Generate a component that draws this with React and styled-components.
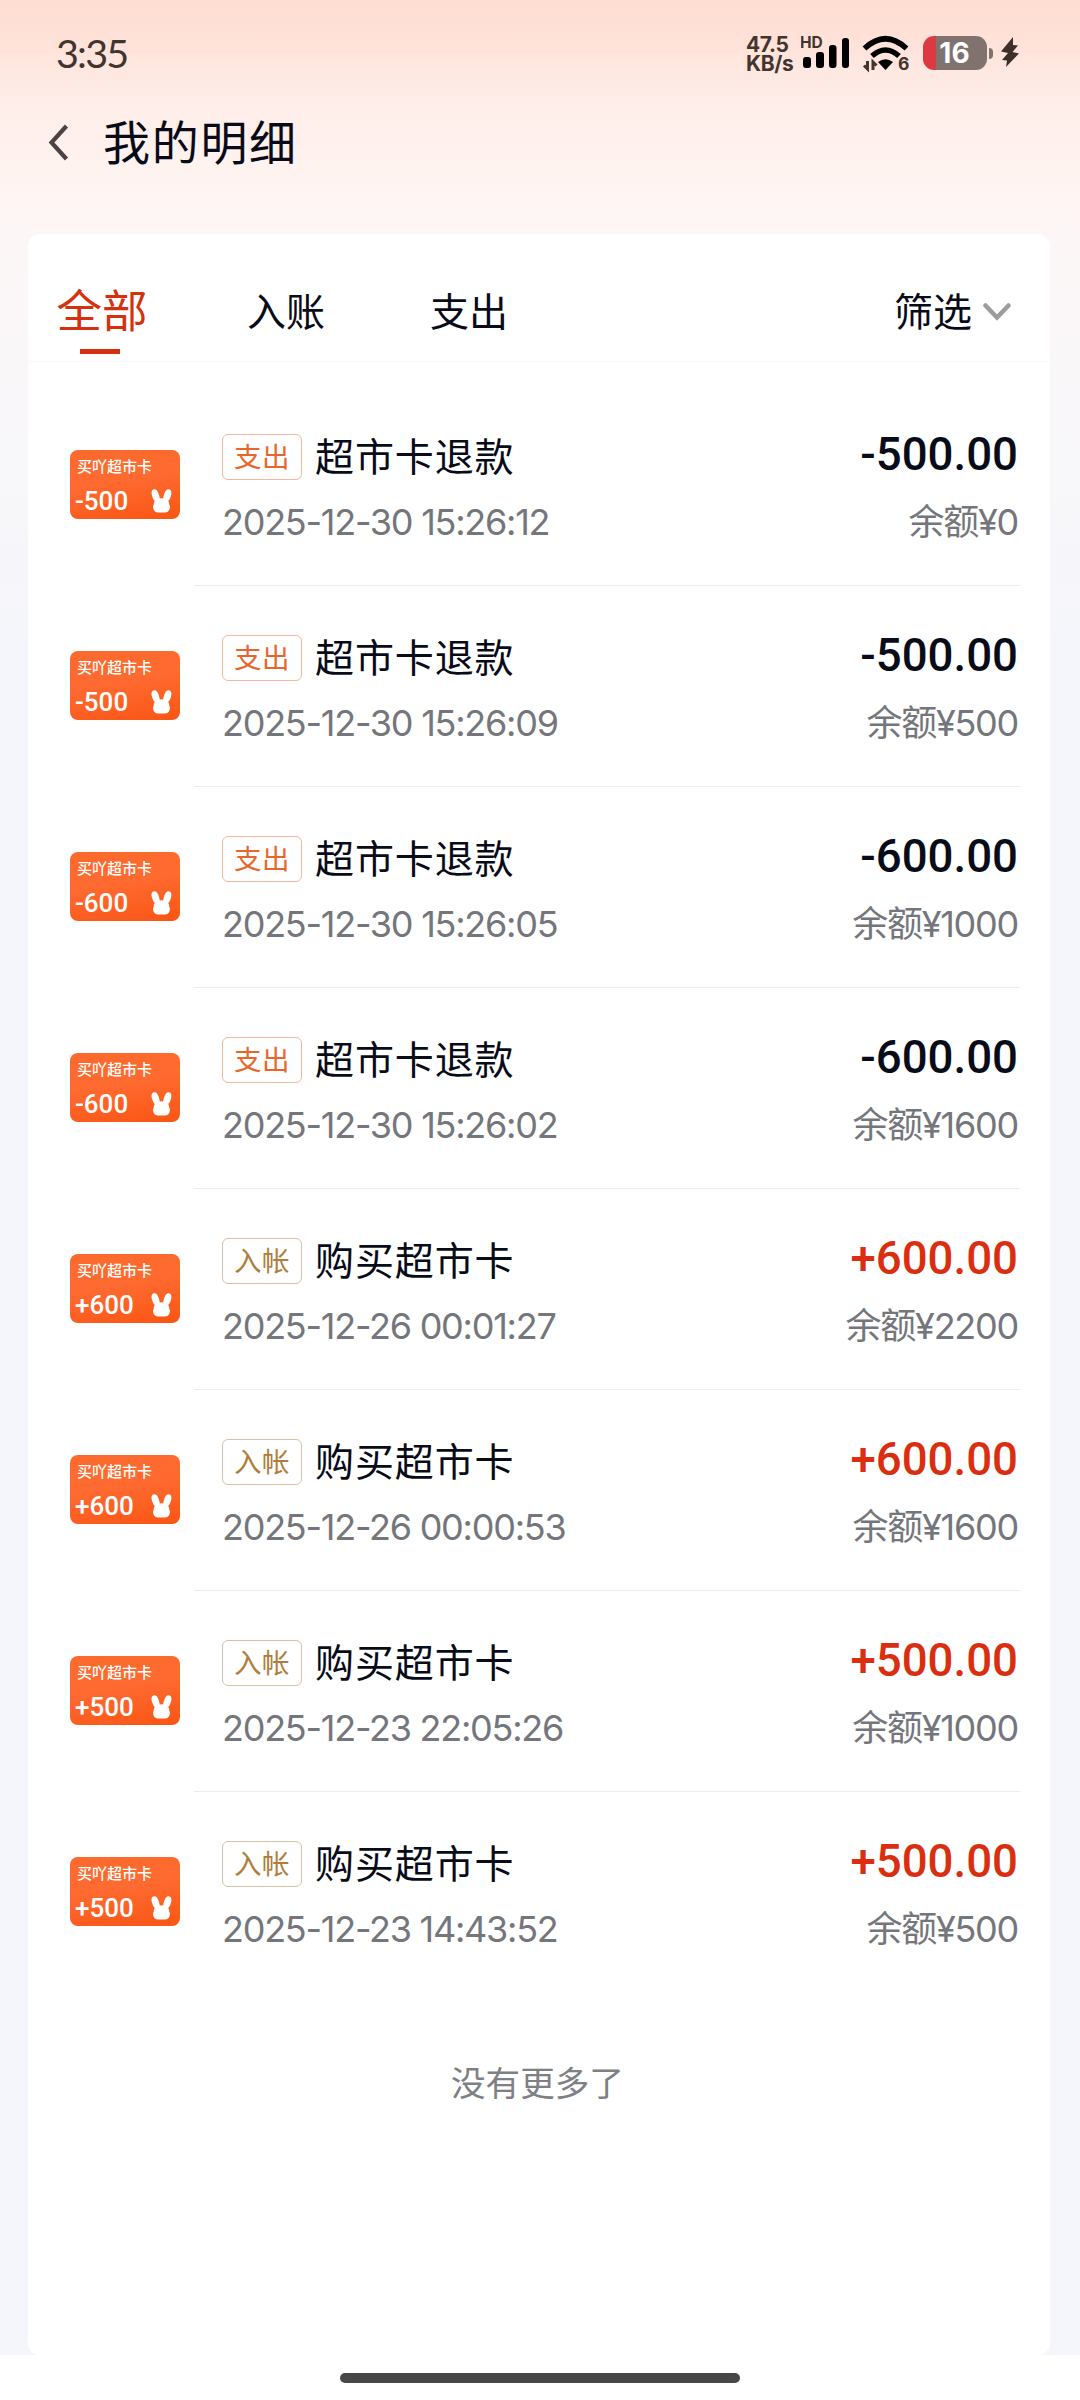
import React from 'react';
import styled, { createGlobalStyle } from 'styled-components';

const GlobalStyle = createGlobalStyle`
  * {
    box-sizing: border-box;
  }

  body {
    margin: 0;
    font-family: Inter, 'Noto Sans CJK SC', sans-serif;
    color: #080b18;
  }
`;

const Page = styled.div`
  display: flex;
  flex-direction: column;
  width: 1080px;
  height: 2400px;
  overflow: hidden;
  background: linear-gradient(
    180deg,
    #ffddd2 0,
    #ffe2d9 45px,
    #fee9e2 75px,
    #ffeeea 110px,
    #fff5f3 200px,
    #fcf6f6 240px,
    #f9f7f9 400px,
    #f5f6fb 640px
  );
`;

const StatusBar = styled.div`
  display: flex;
  justify-content: space-between;
  height: 100px;
  padding: 32px 61px 0 56px;
  color: #43342e;
`;

const Clock = styled.div`
  height: 42px;
  font-family: Lato, sans-serif;
  font-size: 39.5px;
  line-height: 41px;
  letter-spacing: -1.8px;
`;

const StatusIcons = styled.div`
  display: flex;
  height: 42px;
`;

const Speed = styled.div`
  width: 55px;
  padding-top: 3px;
  font-size: 21px;
  font-weight: 700;
  line-height: 19px;
  letter-spacing: -0.4px;
`;

const Battery = styled.div`
  display: flex;
  align-items: center;
  width: 72px;
  height: 42px;
  margin-left: 13px;
`;

const BatteryBody = styled.div`
  width: 64px;
  height: 34px;
  padding-right: 1px;
  border-radius: 11px;
  background: linear-gradient(90deg, #dc3a40 13px, #80736f 13px);
  color: #fff;
  font-size: 28px;
  font-weight: 700;
  line-height: 34px;
  text-align: center;
`;

const BatteryTip = styled.div`
  width: 4px;
  height: 11px;
  margin-left: 2px;
  border-radius: 0 5px 5px 0;
  background: #80736f;
`;

const Header = styled.header`
  display: flex;
  align-items: center;
  height: 84px;
  padding-left: 48px;
  margin-bottom: 50px;
`;

const Title = styled.h1`
  margin: -4px 0 0 34px;
  font-family: 'Noto Sans CJK SC', sans-serif;
  font-size: 47px;
  font-weight: 400;
  line-height: 60px;
  letter-spacing: 1.7px;
`;

const Card = styled.main`
  width: 1022px;
  height: 2121px;
  margin-left: 28px;
  border-radius: 12px;
  background: #fff;
`;

const Tabs = styled.nav`
  display: flex;
  height: 128px;
  padding: 48px 39px 0 29px;
  border-bottom: 1px solid #f8f8f8;
`;

const Tab = styled.div`
  display: flex;
  flex-direction: column;
  align-items: center;
  width: ${({ $width }) => $width}px;
  color: ${({ $active }) => ($active ? '#d5310e' : 'inherit')};
  font-size: ${({ $active }) => ($active ? 45.5 : 39)}px;
  line-height: 60px;
  white-space: nowrap;

  &::after {
    content: '';
    display: ${({ $active }) => ($active ? 'block' : 'none')};
    width: 40px;
    height: 5px;
    margin: 7px 4px 0 0;
    background: #d5310e;
  }
`;

const Filter = styled.div`
  display: flex;
  align-items: center;
  gap: 11px;
  height: 60px;
  margin-left: auto;
  font-size: 39px;
`;

const FilterLabel = styled.span`
  height: 60px;
  line-height: 59px;
`;

const List = styled.div`
  padding: 23px 30px 0 42px;
`;

const Row = styled.div`
  display: flex;
  height: 201px;
`;

const Thumb = styled.div`
  display: flex;
  flex-direction: column;
  justify-content: space-between;
  width: 110px;
  height: 69px;
  margin: 65px 14px 0 0;
  padding: 6px 8px 5px 5px;
  border-radius: 8px;
  background: linear-gradient(170deg, #fb6a2c 0%, #ff6a30 45%, #fa5514 100%);
  color: #fff;
`;

const ThumbName = styled.div`
  padding-left: 2px;
  font-size: 15px;
  font-weight: 500;
  line-height: 21px;
  white-space: nowrap;
`;

const ThumbBottom = styled.div`
  display: flex;
  align-items: center;
  justify-content: space-between;
  height: 28px;
  padding-top: 1px;
  font-family: Roboto, sans-serif;
  font-size: 26px;
  font-weight: 500;
`;

const Content = styled.div`
  display: flex;
  flex: 1;
  justify-content: space-between;
  padding: 49px 2px 0 28px;
  border-bottom: 1px solid ${({ $last }) => ($last ? 'transparent' : '#ececee')};
`;

const NameLine = styled.div`
  display: flex;
  height: 46px;
  font-size: 39px;
  line-height: 46px;
  letter-spacing: 0.9px;
`;

const Tag = styled.span`
  width: 80px;
  height: 46px;
  margin-right: 13px;
  border: 1.5px solid ${({ $income }) => ($income ? '#d9bfa6' : '#f6b59d')};
  border-radius: 6px;
  color: ${({ $income }) => ($income ? '#b07d3c' : '#e8662a')};
  font-size: 27.5px;
  line-height: 44px;
  letter-spacing: 0.5px;
  text-align: center;
`;

const Time = styled.div`
  margin-top: 21px;
  color: #74767c;
  font-size: 36px;
  line-height: 42px;
  letter-spacing: -1.25px;
`;

const Amounts = styled.div`
  text-align: right;
`;

const Amount = styled.div`
  height: 46px;
  color: ${({ $income }) => ($income ? '#d92f10' : '#080b18')};
  font-family: Roboto, sans-serif;
  font-size: 45.6px;
  font-weight: 500;
  line-height: 41px;
`;

const Balance = styled(Time)`
  margin-right: 0;
`;

const End = styled.div`
  margin-top: 65px;
  padding-right: 3px;
  color: #7e8085;
  font-size: 34.6px;
  line-height: 50px;
  text-align: center;
`;

const HomeBar = styled.footer`
  display: flex;
  justify-content: center;
  height: 45px;
  padding-top: 18px;
  background: #fff;

  &::after {
    content: '';
    width: 400px;
    height: 10px;
    border-radius: 5px;
    background: #474747;
  }
`;

const records = [
  { name: '超市卡退款', time: '2025-12-30 15:26:12', amount: -500, balance: 0 },
  { name: '超市卡退款', time: '2025-12-30 15:26:09', amount: -500, balance: 500 },
  { name: '超市卡退款', time: '2025-12-30 15:26:05', amount: -600, balance: 1000 },
  { name: '超市卡退款', time: '2025-12-30 15:26:02', amount: -600, balance: 1600 },
  { name: '购买超市卡', time: '2025-12-26 00:01:27', amount: 600, balance: 2200 },
  { name: '购买超市卡', time: '2025-12-26 00:00:53', amount: 600, balance: 1600 },
  { name: '购买超市卡', time: '2025-12-23 22:05:26', amount: 500, balance: 1000 },
  { name: '购买超市卡', time: '2025-12-23 14:43:52', amount: 500, balance: 500 },
];

const Signal = () => (
  <svg width="48" height="42" viewBox="0 0 48 42">
    <text x="-1" y="16" fontSize="15.500" fontWeight="700" fill="#43342e">
      HD
    </text>
    <g fill="#000">
      <rect x="2" y="25" width="8" height="11" rx="3" />
      <rect x="15" y="20" width="8" height="16" rx="3" />
      <rect x="28" y="13" width="7.5" height="23" rx="3" />
      <rect x="41" y="6" width="7" height="30" rx="3" />
    </g>
  </svg>
);

const WifiIcon = styled.svg`
  margin-left: 13px;
`;

const Wifi = () => (
  <WifiIcon width="48" height="42" viewBox="0 0 48 42">
    <g fill="none" stroke="#000" strokeWidth="5.500">
      <path d="M2.500 16.500q21-19.500 42 0" />
      <path d="M10 24q13.500-12 27 0" />
    </g>
    <path d="M16 30q7.500-5.500 15 0l-7.500 8z" fill="#000" />
    <path d="M5.500 29v8l-3.500-3.500M11 38v-8l3.500 3.500" fill="none" stroke="#43342e" strokeWidth="3" />
    <text x="36" y="38" fontSize="17.500" fontWeight="700" fill="#43342e">
      6
    </text>
  </WifiIcon>
);

const BoltIcon = styled.svg`
  margin-left: 5px;
`;

const Bolt = () => (
  <BoltIcon width="19" height="42" viewBox="0 0 19 42">
    <path d="M13 5L1 19.500l7 1.500-6 7 5 .5L6 35l13-13.500-6.500-1.500L18 13.500l-5-.5z" fill="#3d302b" />
  </BoltIcon>
);

const Rabbit = () => (
  <svg width="21" height="24" viewBox="0 0 21 24">
    <path
      d="M3.500.3C6.500.3 8 5 8.800 9.500q1.700-.4 3.400 0C13 5 14.500.3 17.500.3c3 0 3.300 3.200 2.600 6-.6 2.600-1.700 4.500-2.900 5.700.8 1.200 1.100 2.300 1 3.600 1 1.500.9 3.200.3 4.600-.8 2.300-2.500 3.300-4.500 3.300H7c-2 0-3.700-1-4.500-3.300-.6-1.400-.7-3.100.3-4.600-.1-1.300.2-2.400 1-3.600C2.600 10.800 1.500 8.900.9 6.300.2 3.500.5.3 3.500.3z"
      fill="#fff"
    />
  </svg>
);

const RecordRow = ({ record, last }) => {
  const income = record.amount > 0;
  const amount = `${income ? '+' : ''}${record.amount}`;

  return (
    <Row>
      <Thumb>
        <ThumbName>买吖超市卡</ThumbName>
        <ThumbBottom>
          {amount}
          <Rabbit />
        </ThumbBottom>
      </Thumb>
      <Content $last={last}>
        <div>
          <NameLine>
            <Tag $income={income}>{income ? '入帐' : '支出'}</Tag>
            {record.name}
          </NameLine>
          <Time>{record.time}</Time>
        </div>
        <Amounts>
          <Amount $income={income}>{amount}.00</Amount>
          <Balance>余额¥{record.balance}</Balance>
        </Amounts>
      </Content>
    </Row>
  );
};

export default function App() {
  return (
    <>
      <GlobalStyle />
      <Page>
        <StatusBar>
          <Clock>3:35</Clock>
          <StatusIcons>
            <Speed>
              47.5
              <br />
              KB/s
            </Speed>
            <Signal />
            <Wifi />
            <Battery>
              <BatteryBody>16</BatteryBody>
              <BatteryTip />
            </Battery>
            <Bolt />
          </StatusIcons>
        </StatusBar>
        <Header>
          <svg width="21" height="40" viewBox="0 0 21 40">
            <path d="M18.500 4L3.500 20.500l15 16.500" fill="none" stroke="#4a4244" strokeWidth="4.200" />
          </svg>
          <Title>我的明细</Title>
        </Header>
        <Card>
          <Tabs>
            <Tab $width={90} $active>
              全部
            </Tab>
            <Tab $width={278}>入账</Tab>
            <Tab $width={88}>支出</Tab>
            <Filter>
              <FilterLabel>筛选</FilterLabel>
              <svg width="28" height="18" viewBox="0 0 28 18">
                <path
                  d="M2.500 2.500L14 14.500l11.500-12"
                  fill="none"
                  stroke="#9c9c9e"
                  strokeWidth="4.500"
                  strokeLinecap="round"
                />
              </svg>
            </Filter>
          </Tabs>
          <List>
            {records.map((record, i) => (
              <RecordRow key={record.time} record={record} last={i === records.length - 1} />
            ))}
          </List>
          <End>没有更多了</End>
        </Card>
        <HomeBar />
      </Page>
    </>
  );
}
